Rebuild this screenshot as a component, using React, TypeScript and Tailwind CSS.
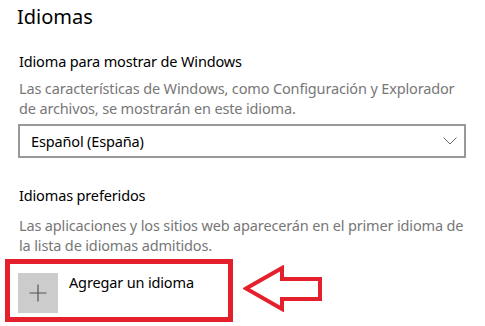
export default function App() {
  return (
    <div className="w-[485px] h-[326px] bg-white overflow-hidden text-black font-['Noto_Sans','Open_Sans',sans-serif]">
      <div className="pl-[19px] pt-[3px]">
        {/* Section title */}
        <h1 className="-ml-[2px] text-[20px] leading-[28px]">Idiomas</h1>

        {/* Display language */}
        <h2 className="mt-[20px] text-[14.5px] leading-[20px] tracking-[-0.15px]">Idioma para mostrar de Windows</h2>
        <p className="mt-[7px] w-[450px] text-[14.5px] leading-[20px] tracking-[-0.15px] text-[#777777]">
          Las características de Windows, como Configuración y Explorador de archivos, se mostrarán en este idioma.
        </p>
        <div className="mt-[6px] -ml-[1px] flex h-[34px] w-[448px] items-center justify-between border-2 border-[#999999] pl-[11px] pr-[7px]">
          <span className="text-[14.5px] leading-[20px] tracking-[-0.15px]">Español (España)</span>
          <svg width="14" height="8" viewBox="0 0 14 8" className="text-[#6b6b6b]">
            <polyline points="0.5,0.5 7,7 13.5,0.5" fill="none" stroke="currentColor" strokeWidth="1" />
          </svg>
        </div>

        {/* Preferred languages */}
        <h2 className="mt-[27px] text-[14.5px] leading-[20px] tracking-[-0.15px]">Idiomas preferidos</h2>
        <p className="mt-[10px] w-[450px] text-[14.5px] leading-[20px] tracking-[-0.15px] text-[#777777]">
          Las aplicaciones y los sitios web aparecerán en el primer idioma de la lista de idiomas admitidos.
        </p>

        {/* Add language button, highlighted */}
        <div className="mt-[4px] -ml-[14px] flex items-center">
          <div className="flex h-[63px] w-[228px] items-start border-[5px] border-[#e3202c] pl-[8px] pt-[9px]">
            <div className="flex h-[40px] w-[40px] items-center justify-center bg-[#cccccc]">
              <svg width="18" height="18" viewBox="0 0 18 18" className="text-[#555555]">
                <path d="M9 0.5v17M0.5 9h17" fill="none" stroke="currentColor" strokeWidth="1.2" />
              </svg>
            </div>
            <span className="ml-[11px] mt-[-1px] text-[14.5px] leading-[20px] tracking-[-0.15px]">Agregar un idioma</span>
          </div>
          <svg width="80" height="47" viewBox="0 0 80 47" className="ml-[10px] -mt-[4px] text-[#e3202c]">
            <polygon
              points="3,23.5 39,3 39,14 77,14 77,34 39,34 39,44"
              fill="none"
              stroke="currentColor"
              strokeWidth="4"
              strokeLinejoin="miter"
            />
          </svg>
        </div>
      </div>
    </div>
  );
}
